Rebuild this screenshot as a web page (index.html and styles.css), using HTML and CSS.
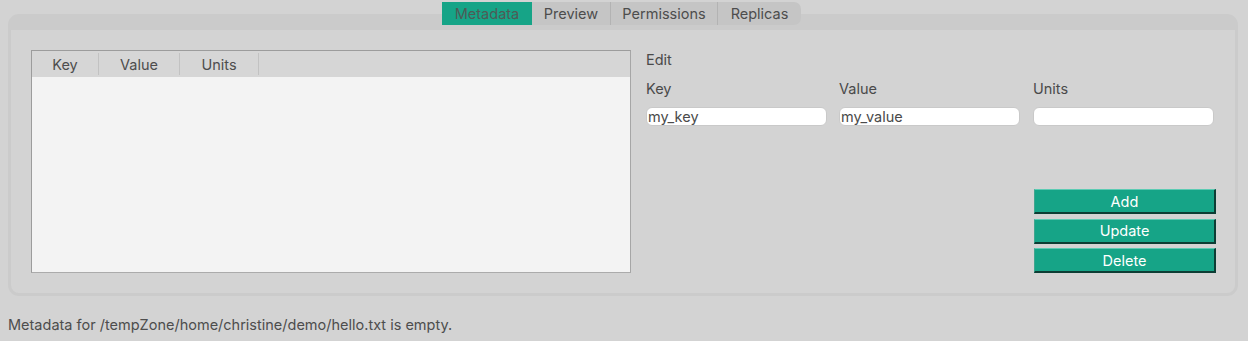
FILE: index.html
```html
<!DOCTYPE html>
<html lang="en">
<head>
  <meta charset="UTF-8">
  <title>Metadata</title>
  <link rel="stylesheet" href="styles.css">
</head>
<body>
  <div class="tab-widget">
    <div class="tab-bar">
      <div class="tab active">Metadata</div>
      <div class="tab">Preview</div>
      <div class="tab">Permissions</div>
      <div class="tab">Replicas</div>
    </div>

    <div class="pane">
      <div class="meta-table">
        <div class="meta-head">
          <div class="col col-key">Key</div>
          <div class="col col-value">Value</div>
          <div class="col col-units">Units</div>
        </div>
        <div class="meta-body"></div>
      </div>

      <div class="editor">
        <div class="edit-title">Edit</div>
        <div class="fields">
          <label class="field">
            <span>Key</span>
            <input type="text" value="my_key">
          </label>
          <label class="field">
            <span>Value</span>
            <input type="text" value="my_value">
          </label>
          <label class="field">
            <span>Units</span>
            <input type="text" value="">
          </label>
        </div>
        <div class="actions">
          <button>Add</button>
          <button>Update</button>
          <button>Delete</button>
        </div>
      </div>
    </div>
  </div>

  <div class="status">Metadata for /tempZone/home/christine/demo/hello.txt is empty.</div>
</body>
</html>
```

FILE: styles.css
```css
:root {
  --bg: #d3d3d3;
  --frame: #cbcbcb;
  --text: #4a4a4a;
  --accent: #16a487;
  --tab-bg: #c5c5c5;
  --tab-sep: #b3b3b3;
}

body {
  margin: 0;
  background-color: var(--bg);
  color: var(--text);
  font-family: Inter, "Noto Sans", sans-serif;
  font-size: 14.5px;
}

.tab-widget {
  display: flex;
  flex-direction: column;
  padding: 2px 10px 0 8px;
}

.tab-bar {
  display: flex;
  align-self: flex-start;
  margin-left: 434px;
  height: 23px;
  background-color: var(--tab-bg);
  border-radius: 0 7px 7px 0;
  position: relative;
  z-index: 1;
  margin-bottom: -11px;
}

.tab {
  display: flex;
  align-items: center;
  justify-content: center;
  color: #4d4d4d;
  border-left: 1px solid var(--tab-sep);
}

.tab:nth-child(1) { width: 90px; }
.tab:nth-child(2) { width: 78px; }
.tab:nth-child(3) { width: 106px; }
.tab:nth-child(4) { width: 83px; }

.tab.active {
  background-color: var(--accent);
  color: #4f5a56;
  border-left: none;
}

.tab.active + .tab {
  border-left: none;
}

.pane {
  display: flex;
  gap: 15px;
  height: 243px;
  border: 3px solid var(--frame);
  border-top-width: 16px;
  border-radius: 11px;
  padding: 20px 20px 0 20px;
}

.meta-table {
  width: 598px;
  height: 221px;
  display: flex;
  flex-direction: column;
  border: 1px solid #9c9c9c;
  border-bottom-color: #ababab;
  border-right-color: #a6a6a6;
}

.meta-head {
  display: flex;
  height: 26px;
  background-color: #d6d6d6;
}

.col {
  display: flex;
  align-items: center;
  justify-content: center;
  border-right: 1px solid #c2c2c2;
  margin: 2px 0;
  color: #4d4d4d;
}

.col-key { width: 66px; }
.col-value { width: 80px; }
.col-units { width: 78px; }

.meta-body {
  flex: 1;
  background-color: #f3f3f3;
}

.editor {
  flex: 1;
  display: flex;
  flex-direction: column;
}

.edit-title {
  margin-top: 1px;
  line-height: 18px;
}

.fields {
  display: grid;
  grid-template-columns: 181px 181px 182px;
  gap: 11px;
  column-gap: 12px;
  margin-top: 11px;
}

.fields .field:nth-child(3) {
  margin-left: 1px;
}

.field {
  display: flex;
  flex-direction: column;
  gap: 9px;
}

.field span {
  line-height: 18px;
}

.field input {
  height: 19px;
  box-sizing: border-box;
  border: 1px solid #c9c9c9;
  border-radius: 6px;
  background-color: #ffffff;
  font-family: Inter, "Noto Sans", sans-serif;
  font-size: 14.5px;
  color: #4a4a4a;
  padding: 0 1px;
}

.actions {
  display: flex;
  flex-direction: column;
  gap: 4.5px;
  width: 182px;
  align-self: flex-end;
  margin-top: 63px;
  margin-right: -1px;
}

.actions button {
  height: 25px;
  background-color: var(--accent);
  color: #ffffff;
  font-family: Inter, "Noto Sans", sans-serif;
  font-size: 14.5px;
  border: 1px solid;
  border-color: #5ccbb3 #0d3d34 #0d3d34 #3fa58f;
  border-bottom-width: 2px;
  border-right-width: 2px;
  padding: 0;
}

.status {
  margin: 20px 0 0 8px;
  color: #4d4d4d;
}
```
